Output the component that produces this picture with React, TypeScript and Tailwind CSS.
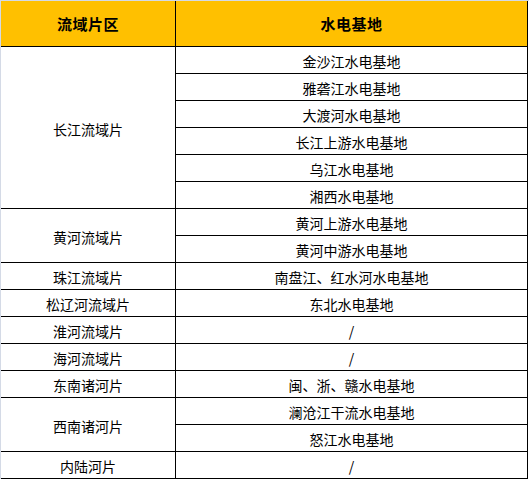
const groups: { name: string; bases: string[] }[] = [
  {
    name: "长江流域片",
    bases: [
      "金沙江水电基地",
      "雅砻江水电基地",
      "大渡河水电基地",
      "长江上游水电基地",
      "乌江水电基地",
      "湘西水电基地",
    ],
  },
  { name: "黄河流域片", bases: ["黄河上游水电基地", "黄河中游水电基地"] },
  { name: "珠江流域片", bases: ["南盘江、红水河水电基地"] },
  { name: "松辽河流域片", bases: ["东北水电基地"] },
  { name: "淮河流域片", bases: ["/"] },
  { name: "海河流域片", bases: ["/"] },
  { name: "东南诸河片", bases: ["闽、浙、赣水电基地"] },
  { name: "西南诸河片", bases: ["澜沧江干流水电基地", "怒江水电基地"] },
  { name: "内陆河片", bases: ["/"] },
];

const font = { fontFamily: '"Noto Sans CJK SC", "Liberation Sans", sans-serif' };

export default function App() {
  return (
    <div
      className="w-[529px] h-[479px] bg-white border-t border-l border-[#d4dae6] text-black"
      style={font}
    >
      <div className="w-[527px] border-r border-black">
        {/* header */}
        <div className="flex h-[46px] bg-[#ffc000] border-b border-black text-[15px] font-bold leading-none">
          <div className="w-[175px] border-r border-black flex items-center justify-center tracking-[0.5px]">
            流域片区
          </div>
          <div className="flex-1 flex items-center justify-center tracking-[0.5px]">
            水电基地
          </div>
        </div>

        {/* body */}
        {groups.map((g) => (
          <div key={g.name} className="flex border-b border-black text-[14px] leading-none">
            <div className="w-[175px] border-r border-black flex items-center justify-center pt-[2px]">
              {g.name}
            </div>
            <div className="flex-1 flex flex-col">
              {g.bases.map((b, i) => (
                <div
                  key={i}
                  className={
                    i < g.bases.length - 1
                      ? "h-[27px] border-b border-black flex items-center justify-center pt-px"
                      : "h-[26px] flex items-center justify-center pt-px"
                  }
                >
                  {b}
                </div>
              ))}
            </div>
          </div>
        ))}
      </div>
    </div>
  );
}
